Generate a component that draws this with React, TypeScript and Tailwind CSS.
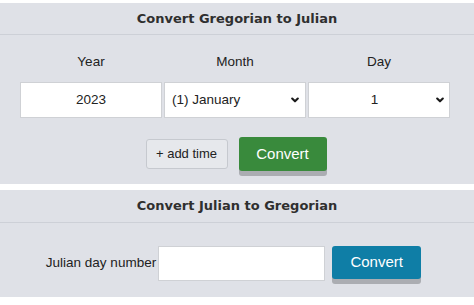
import React from "react";

function Chevron({ className = "" }: { className?: string }) {
  return (
    <svg
      className={className}
      width="8"
      height="6"
      viewBox="0 0 8 6"
      fill="none"
      stroke="#1a1a1a"
      strokeWidth="2.1"
      strokeLinecap="round"
      strokeLinejoin="round"
    >
      <path d="M1.2 1.5 L4 4.3 L6.8 1.5" />
    </svg>
  );
}

export default function App() {
  const arial = { fontFamily: '"Liberation Sans", Arial, sans-serif' };
  return (
    <div className="w-[474px] h-[305px] bg-white pt-[3px] overflow-hidden" style={arial}>
      {/* Panel 1 */}
      <section className="bg-[#dfe1e7] h-[181px] flex flex-col">
        <h2 className="h-[32px] border-b border-[#cdd0d7] flex items-center justify-center text-[13px] font-bold text-[#2f2f2f] [font-family:'DejaVu_Sans',Verdana,sans-serif]">
          Convert Gregorian to Julian
        </h2>
        <div className="flex flex-col items-center">
          <div className="grid grid-cols-3 gap-x-[2px] w-[430px] ml-[-4px] mt-[19px]">
            <div className="text-center text-[13.5px] text-[#222] leading-[16px]">Year</div>
            <div className="text-center text-[13.5px] text-[#222] leading-[16px]">Month</div>
            <div className="text-center text-[13.5px] text-[#222] leading-[16px]">Day</div>
            <div className="mt-[12px] h-[36px] bg-white border border-[#cfd1d5] flex items-center justify-center text-[13.5px] text-[#222]">
              2023
            </div>
            <div className="mt-[12px] h-[36px] bg-white border border-[#cfd1d5] flex items-center justify-between pl-[7px] pr-[6px] text-[13.5px] text-[#222]">
              <span>(1) January</span>
              <Chevron />
            </div>
            <div className="mt-[12px] h-[36px] bg-white border border-[#cfd1d5] flex items-center pr-[5px] text-[13.5px] text-[#222]">
              <span className="flex-1 text-center pl-[4px]">1</span>
              <Chevron />
            </div>
          </div>
          <div className="flex items-start gap-[11px] mt-[19px] ml-[-2px]">
            <button className="h-[30px] w-[82px] mt-[2px] bg-[#e6e8ec] border border-[#c6c9cf] rounded-[3px] text-[13px] text-[#222]">
              + add time
            </button>
            <button className="h-[34px] w-[88px] bg-[#398a3c] text-white text-[15px] rounded-[3px] shadow-[0_5px_0_#abadb2]">
              Convert
            </button>
          </div>
        </div>
      </section>

      {/* Panel 2 */}
      <section className="bg-[#dfe1e7] h-[107px] mt-[6px] flex flex-col">
        <h2 className="h-[33px] border-b border-[#cdd0d7] flex items-center justify-center text-[13px] font-bold text-[#2f2f2f] [font-family:'DejaVu_Sans',Verdana,sans-serif]">
          Convert Julian to Gregorian
        </h2>
        <div className="flex items-start justify-center mt-[23px] ml-[-7px]">
          <label className="text-[13.5px] text-[#222] h-[35px] flex items-center mr-[2px]">Julian day number</label>
          <div className="w-[167px] h-[35px] bg-white border border-[#cfd1d5]" />
          <button className="ml-[7px] h-[33px] w-[89px] bg-[#0f7ea6] text-white text-[15px] rounded-[3px] shadow-[0_5px_0_#abadb2]">
            Convert
          </button>
        </div>
      </section>
    </div>
  );
}
